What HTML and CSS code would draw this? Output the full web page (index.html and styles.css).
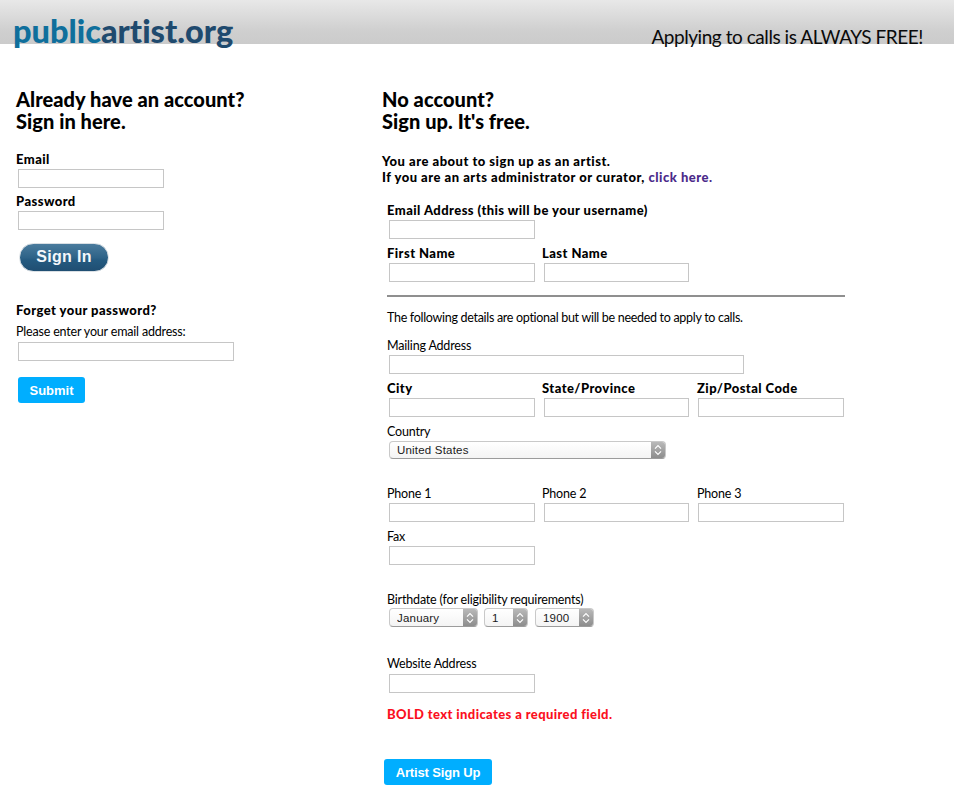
FILE: index.html
```html
<!DOCTYPE html>
<html lang="en">
<head>
<meta charset="utf-8">
<title>publicartist.org</title>
<link rel="stylesheet" href="styles.css">
</head>
<body>
<header class="topbar">
  <a class="logo" href="#"><span class="logo-a">public</span><span class="logo-b">artist.org</span></a>
  <p class="tagline">Applying to calls is ALWAYS FREE!</p>
</header>
<main class="columns">
  <section class="signin">
    <h2>Already have an account?<br>Sign in here.</h2>
    <form class="signin-form">
      <label class="lbl strong">Email</label>
      <input class="inp" type="text">
      <label class="lbl strong pw">Password</label>
      <input class="inp" type="password">
      <button class="pill" type="button">Sign In</button>
      <p class="lbl strong forgot">Forget your password?</p>
      <p class="lbl enter">Please enter your email address:</p>
      <input class="inp wide" type="text">
      <button class="btn submit" type="button">Submit</button>
    </form>
  </section>
  <section class="signup">
    <h2>No account?<br>Sign up. It's free.</h2>
    <p class="intro">You are about to sign up as an artist.<br>If you are an arts administrator or curator, <a href="#">click here.</a></p>
    <form class="signup-form">
      <div class="row r-email"><div class="field"><label class="lbl strong nowrap">Email Address (this will be your username)</label><input class="inp" type="text"></div></div>
      <div class="row r-tight"><div class="field"><label class="lbl strong">First Name</label><input class="inp" type="text"></div><div class="field"><label class="lbl strong">Last Name</label><input class="inp" type="text"></div></div>
      <hr class="rule">
      <p class="lbl note">The following details are optional but will be needed to apply to calls.</p>
      <div class="row r-mail"><div class="field"><label class="lbl nowrap">Mailing Address</label><input class="inp addr" type="text"></div></div>
      <div class="row r-tight"><div class="field"><label class="lbl strong">City</label><input class="inp" type="text"></div><div class="field"><label class="lbl strong">State/Province</label><input class="inp" type="text"></div><div class="field"><label class="lbl strong">Zip/Postal Code</label><input class="inp" type="text"></div></div>
      <div class="row r-tight"><div class="field"><label class="lbl">Country</label>
        <span class="sel sel-country"><select><option>United States</option></select><span class="stepper"><svg viewBox="0 0 8 12" width="8" height="12"><path d="M1 4.6 4 1.6 7 4.6M1 7.4 4 10.4 7 7.4"/></svg></span></span>
      </div></div>
      <div class="row r-phone"><div class="field"><label class="lbl">Phone 1</label><input class="inp" type="text"></div><div class="field"><label class="lbl">Phone 2</label><input class="inp" type="text"></div><div class="field"><label class="lbl">Phone 3</label><input class="inp" type="text"></div></div>
      <div class="row r-tight"><div class="field"><label class="lbl">Fax</label><input class="inp" type="text"></div></div>
      <div class="row r-birth"><div class="field"><label class="lbl nowrap">Birthdate (for eligibility requirements)</label>
        <div class="sels">
          <span class="sel sel-month"><select><option>January</option></select><span class="stepper"><svg viewBox="0 0 8 12" width="8" height="12"><path d="M1 4.6 4 1.6 7 4.6M1 7.4 4 10.4 7 7.4"/></svg></span></span>
          <span class="sel sel-day"><select><option>1</option></select><span class="stepper"><svg viewBox="0 0 8 12" width="8" height="12"><path d="M1 4.6 4 1.6 7 4.6M1 7.4 4 10.4 7 7.4"/></svg></span></span>
          <span class="sel sel-year"><select><option>1900</option></select><span class="stepper"><svg viewBox="0 0 8 12" width="8" height="12"><path d="M1 4.6 4 1.6 7 4.6M1 7.4 4 10.4 7 7.4"/></svg></span></span>
        </div>
      </div></div>
      <div class="row r-web"><div class="field"><label class="lbl">Website Address</label><input class="inp" type="text"></div></div>
      <p class="lbl strong required">BOLD text indicates a required field.</p>
      <button class="btn signup-btn" type="button">Artist Sign Up</button>
    </form>
  </section>
</main>
</body>
</html>
```

FILE: styles.css
```css
* { box-sizing: border-box; }
html, body { margin: 0; padding: 0; }
body {
  background: #fff;
  color: #000;
  font-family: Lato, "Open Sans", sans-serif;
  font-size: 13px;
  font-variant-ligatures: none;
  height: 803px;
  overflow: hidden;
}
p, h2 { margin: 0; }

.topbar {
  display: flex;
  justify-content: space-between;
  height: 44px;
  padding: 0 31px 0 13px;
  background: linear-gradient(#e8e8e8, #cfcfcf 70%, #cbcbcb);
}
.logo {
  font-size: 32.5px;
  font-weight: 900;
  line-height: 40px;
  margin-top: 11px;
  height: 40px;
  text-decoration: none;
}
.logo-a { color: #0f6f9c; }
.logo-b { color: #1f4a6e; }
.tagline {
  font-size: 19px;
  letter-spacing: -0.45px;
  line-height: 24px;
  margin-top: 25px;
  height: 24px;
  color: #0a0a0a;
}

.columns { display: flex; }
.signin { width: 382px; padding: 44px 0 0 16px; flex: none; }
.signup { flex: 1; padding-top: 44px; }
h2 {
  font-size: 20px;
  font-weight: 900;
  letter-spacing: 0.05px;
  line-height: 22px;
}

.lbl { display: block; font-size: 12.5px; line-height: 16px; letter-spacing: -0.18px; }
.field .lbl { line-height: 18px; margin-bottom: -2px; }
.lbl.strong, .field .lbl.strong, .r-web .field .lbl {
  line-height: 16px;
  margin-bottom: 0;
}
.lbl.strong { font-size: 13px; font-weight: 900; letter-spacing: 0.44px; }
.nowrap { white-space: nowrap; }

.inp {
  display: block;
  width: 146px;
  height: 19px;
  margin: 2px 0 0 2px;
  padding: 0 3px;
  border: 1px solid #c6c6c6;
  background: #fff;
  border-radius: 0;
  outline: none;
}
.inp.wide { width: 216px; }
.inp.addr { width: 355px; }
.field:nth-child(2) .inp { width: 145px; }
.field:nth-child(3) .inp { margin-left: 1px; }

.signin-form { padding-top: 19px; }
.signin-form .lbl.pw { margin-top: 5px; }
.pill {
  display: block;
  width: 90px;
  height: 29px;
  margin: 13px 0 0 3px;
  padding: 0 0 1px;
  border: 1px solid #d9dfe4;
  border-radius: 15px;
  background: linear-gradient(#4a7b9d, #2e6388 50%, #245a80 60%, #1f4e72);
  color: #f4f7fa;
  font: 700 16px "Liberation Sans", Arial, sans-serif;
  letter-spacing: 0.3px;
}
.forgot { margin-top: 30px; }
.enter { margin-top: 6px; }
.btn {
  display: block;
  height: 26px;
  padding: 0;
  border: 0;
  border-radius: 3px;
  background: #00aeff;
  color: #fff;
  font: 700 13px "Liberation Sans", Arial, sans-serif;
}
.submit { width: 67px; margin: 16px 0 0 2px; }

.intro {
  margin-top: 21px;
  font-size: 13px;
  font-weight: 900;
  letter-spacing: 0.5px;
  line-height: 16px;
}
.intro a { color: #4b2a8a; text-decoration: none; }

.signup-form { padding-left: 5px; }
.row { display: flex; }
.field { width: 155px; flex: none; }
.r-email { margin-top: 17px; }
.r-tight { margin-top: 6px; }
.rule {
  width: 458px;
  height: 2px;
  margin: 13px 0 0;
  border: 0;
  background: #8f8f8f;
}
.lbl.note { margin-top: 13px; letter-spacing: -0.3px; }
.r-mail { margin-top: 11px; }
.r-phone { margin-top: 26px; }
.r-birth { margin-top: 26px; }
.r-web { margin-top: 29px; }
.lbl.required { color: #fb0f21; margin-top: 13px; letter-spacing: 0.38px; }
.signup-btn { width: 108px; margin: 37px 0 0 -3px; letter-spacing: -0.15px; }

.sel {
  display: flex;
  flex: none;
  height: 18px;
  margin: 2px 0 0 2px;
  border: 1px solid #c9c9c9;
  border-bottom-color: #9c9c9c;
  border-radius: 4px;
  overflow: hidden;
  background: linear-gradient(#fff, #f4f4f4);
}
.sel select {
  flex: 1;
  min-width: 0;
  appearance: none;
  -webkit-appearance: none;
  border: 0;
  background: transparent;
  padding: 0 0 0 7px;
  font: 11.5px/16px "Liberation Sans", Arial, sans-serif;
  letter-spacing: 0.2px;
  color: #1a1a1a;
  outline: none;
}
.stepper {
  display: flex;
  flex: none;
  width: 14px;
  align-items: center;
  justify-content: center;
  background: linear-gradient(#b9b9b9, #8d8d8d);
}
.stepper svg { fill: none; stroke: #fff; stroke-width: 1.2; }
.sel-country { width: 277px; }
.sels { display: flex; width: max-content; margin-top: 1px; }
.sels .sel { height: 19px; margin-top: 0; }
.sel-month { width: 89px; }
.sels .sel-day { width: 44px; margin-left: 6px; }
.sels .sel-year { width: 59px; margin-left: 7px; }
```
